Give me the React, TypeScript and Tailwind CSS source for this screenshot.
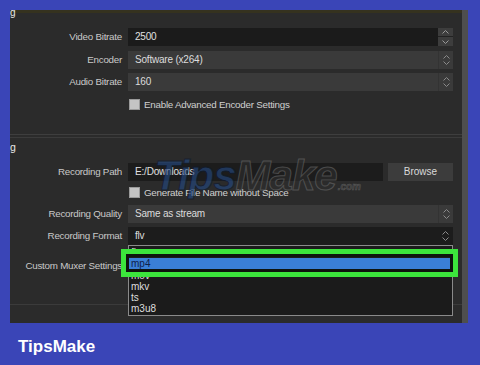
import React from "react";

const font = { fontFamily: '"Liberation Sans", Arial, sans-serif' };

function Arrows() {
  return (
    <svg width="9" height="12" viewBox="0 0 9 12" className="text-[#8a8a8a]">
      <path d="M1.5 4.5 L4.5 1.5 L7.5 4.5" fill="none" stroke="currentColor" strokeWidth="1" />
      <path d="M1.5 7.5 L4.5 10.5 L7.5 7.5" fill="none" stroke="currentColor" strokeWidth="1" />
    </svg>
  );
}

function Label({ children }: { children: React.ReactNode }) {
  return (
    <div className="w-[112px] shrink-0 whitespace-nowrap text-right text-[9.8px] tracking-[-0.25px] text-[#c9c9c9] leading-none">
      {children}
    </div>
  );
}

function Combo({ text, dark }: { text: string; dark?: boolean }) {
  return (
    <div className={`ml-[6px] flex h-[18px] w-[325px] items-center ${dark ? "bg-[#1c1c1c]" : "bg-[#3a3a3a]"}`}>
      <div className="flex-1 pl-[7px] text-[10px] tracking-[-0.2px] text-[#dcdcdc] leading-none">{text}</div>
      <div className={`flex h-full w-[15px] items-center justify-center ${dark ? "" : "border-l border-[#333]"}`}>
        <Arrows />
      </div>
    </div>
  );
}

function Check({ text }: { text: string }) {
  return (
    <div className="flex items-center">
      <div className="w-[119px]" />
      <div className="h-[11px] w-[11px] border border-[#9a9a9a] bg-[#c4c4c4]" />
      <div className="ml-[4px] text-[9.8px] tracking-[-0.25px] text-[#d0d0d0] leading-none">{text}</div>
    </div>
  );
}

export default function App() {
  return (
    <div className="flex h-[365px] w-[480px] flex-col bg-[#3a45b7]" style={font}>
      <div className="flex pl-[10px] pt-[10px]">
        <div className="relative h-[313px] w-[452px] bg-[#2b2b2b]">
          {/* Upper group */}
          <div className="relative h-[125px] border-t-[3px] border-b border-t-[#35321f] border-b-[#3e3e3e]">
            <div className="absolute left-[0px] top-[-5px] text-[10px] leading-none text-[#e8e8e8]">g</div>
            <div className="flex flex-col pt-[15px]">
              <div className="flex h-[18px] items-center">
                <Label>Video Bitrate</Label>
                <div className="ml-[6px] flex h-[18px] w-[325px] items-center bg-[#1b1b1b]">
                  <div className="flex-1 pl-[7px] text-[10px] tracking-[-0.2px] text-[#e0e0e0] leading-none">2500</div>
                  <div className="flex h-full w-[15px] flex-col bg-[#2f2f2f]">
                    <div className="flex h-[9px] items-center justify-center border-b border-[#222] bg-[#3d3d3d]">
                      <svg width="9" height="6" viewBox="0 0 9 6">
                        <path d="M1.5 4.5 L4.5 1.5 L7.5 4.5" fill="none" stroke="#9a9a9a" strokeWidth="1" />
                      </svg>
                    </div>
                    <div className="flex h-[9px] items-center justify-center bg-[#3d3d3d]">
                      <svg width="9" height="6" viewBox="0 0 9 6">
                        <path d="M1.5 1.5 L4.5 4.5 L7.5 1.5" fill="none" stroke="#9a9a9a" strokeWidth="1" />
                      </svg>
                    </div>
                  </div>
                </div>
              </div>
              <div className="mt-[5px] flex h-[18px] items-center">
                <Label>Encoder</Label>
                <Combo text="Software (x264)" />
              </div>
              <div className="mt-[4px] flex h-[18px] items-center">
                <Label>Audio Bitrate</Label>
                <Combo text="160" />
              </div>
              <div className="mt-[8px]">
                <Check text="Enable Advanced Encoder Settings" />
              </div>
            </div>
          </div>

          {/* Lower group */}
          <div className="relative mt-[2px] h-[168px] border-t border-b border-[#3b3b3b]">
            <div className="absolute left-[0px] top-[4px] text-[10.5px] leading-none text-[#e8e8e8]">g</div>
            <div className="flex flex-col pt-[25px]">
              <div className="flex h-[18px] items-center">
                <Label>Recording Path</Label>
                <div className="ml-[6px] flex h-[18px] w-[255px] items-center bg-[#1c1c1c] pl-[7px] text-[10px] tracking-[-0.2px] leading-none text-[#e0e0e0]">
                  E:/Downloads
                </div>
                <div className="ml-[5px] flex h-[18px] w-[65px] items-center justify-center bg-[#3c3c3c] text-[10px] leading-none text-[#dadada]">
                  Browse
                </div>
              </div>
              <div className="mt-[6px]">
                <Check text="Generate File Name without Space" />
              </div>
              <div className="mt-[7px] flex h-[18px] items-center">
                <Label>Recording Quality</Label>
                <Combo text="Same as stream" />
              </div>
              <div className="mt-[4px] flex h-[18px] items-center">
                <Label>Recording Format</Label>
                <Combo text="flv" dark />
              </div>
              <div className="mt-[12px] flex h-[18px] items-center">
                <Label>Custom Muxer Settings</Label>
                <div className="ml-[6px] h-[18px] w-[325px] bg-[#1c1c1c]" />
              </div>
            </div>
          </div>

          {/* Watermark */}
          <div
            className="pointer-events-none absolute left-[144px] top-[145px] flex items-end opacity-60"
            style={{ fontFamily: '"Liberation Sans Narrow", "Liberation Sans", sans-serif' }}
          >
            <span className="text-[42px] font-bold italic leading-none tracking-[-1px] text-[#244a86]" style={{ WebkitTextStroke: "1px #0e1a30" }}>
              Tips
            </span>
            <span className="text-[42px] font-bold italic leading-none tracking-[-1px] text-[#2e2e2e]" style={{ WebkitTextStroke: "1px #6a6a6a" }}>
              Make
            </span>
            <span className="mb-[5px] ml-[1px] text-[10px] font-bold italic leading-none text-[#444]" style={{ WebkitTextStroke: "0.5px #777" }}>
              .com
            </span>
          </div>

          {/* Dropdown list */}
          <div className="absolute left-[118px] top-[235px] w-[325px] border border-[#8a8a8a] bg-[#1b1b1b] py-[1px] text-[10px] leading-none text-[#dedede]">
            <div className="flex h-[11px] items-center pl-[2px]">flv</div>
            <div className="flex h-[12px] items-center bg-[#3a7fd6] pl-[2px] text-[#10204a]">mp4</div>
            <div className="flex h-[11px] items-center pl-[2px]">mov</div>
            <div className="flex h-[11px] items-center pl-[2px]">mkv</div>
            <div className="flex h-[11px] items-center pl-[2px]">ts</div>
            <div className="flex h-[11px] items-center pl-[2px]">m3u8</div>
          </div>

          {/* Green highlight */}
          <div className="absolute left-[111px] top-[239px] h-[28px] w-[337px] border-[5px] border-[#3ce53c]">
            <div className="h-full w-full border-[3px] border-[#0e140e]" />
          </div>
        </div>
        <div className="h-[313px] w-[6px] bg-[#4e4e4e]" />
      </div>
      <div className="pl-[18px] pt-[15px] text-[17px] font-bold leading-none text-white">TipsMake</div>
    </div>
  );
}
